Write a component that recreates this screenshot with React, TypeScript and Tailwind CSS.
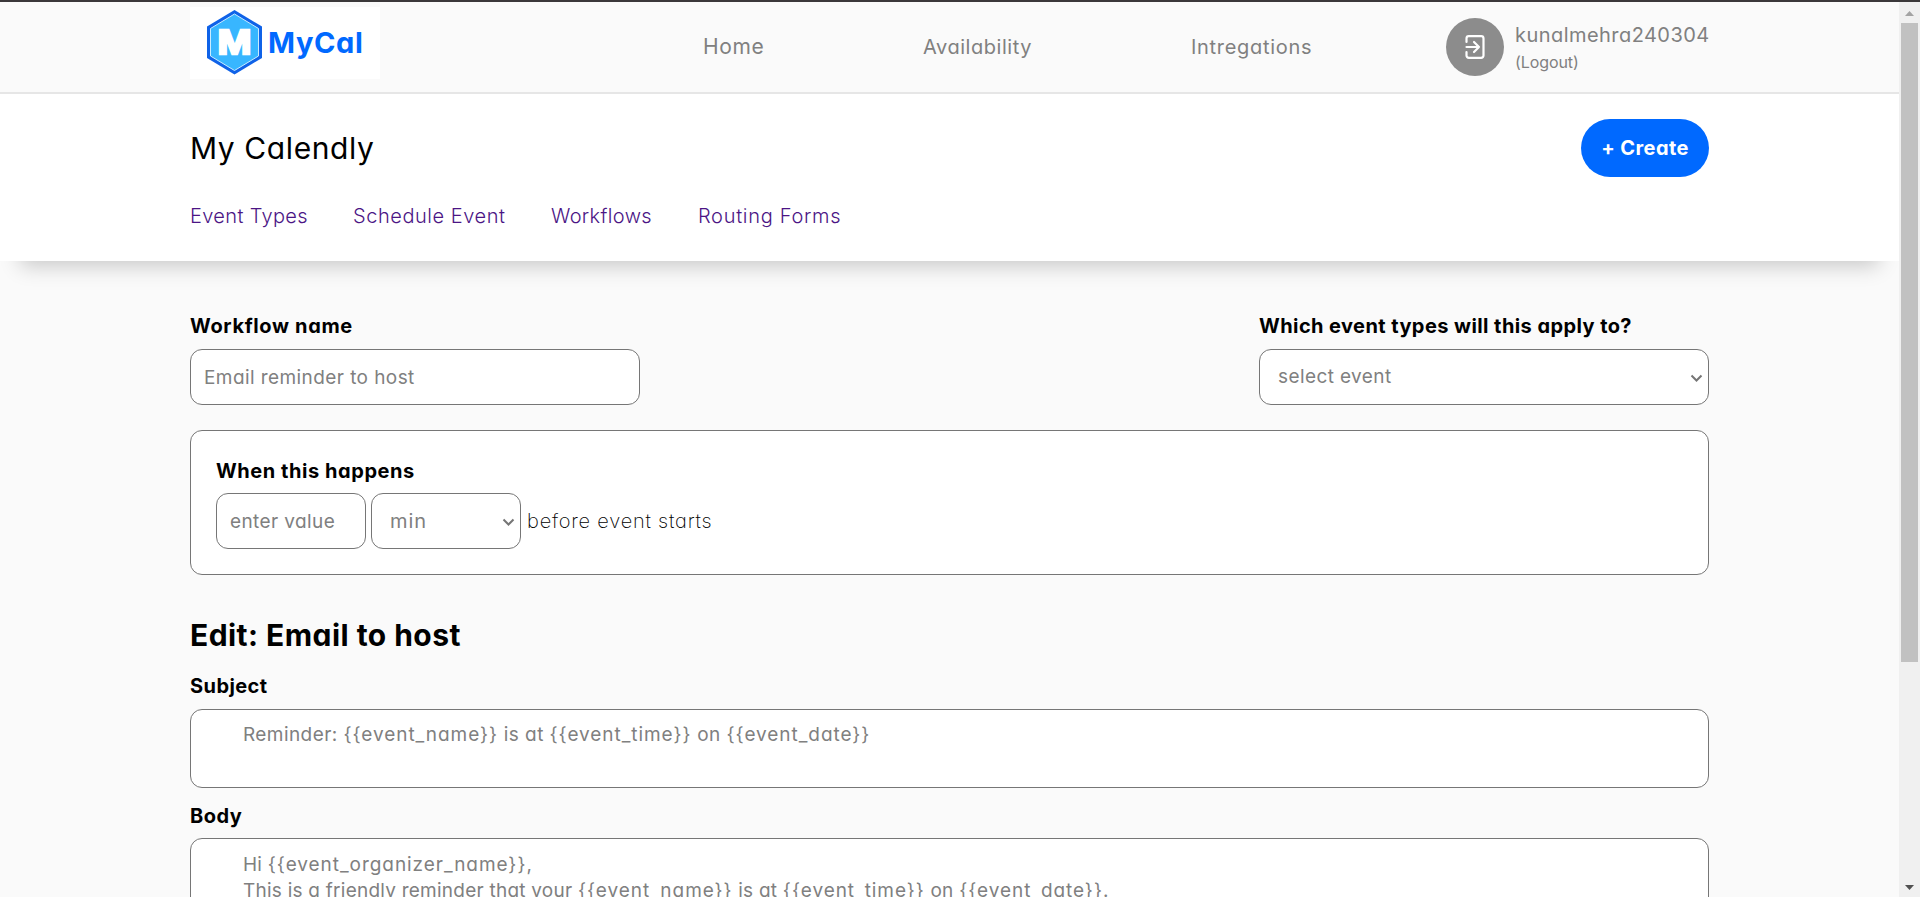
import type { ReactNode } from "react";

function Logo() {
  return (
    <div className="flex h-[72px] w-[190px] items-center bg-white pl-4">
      <svg className="h-[66px] w-[57px] shrink-0" viewBox="0 0 57 66">
        <polygon points="28.5,0 56,16.5 56,48 28.5,64.5 1,48 1,16.5" fill="#0f62e8" />
        <polygon
          points="28.5,4 52.5,18.5 52.5,46 28.5,60.5 4.5,46 4.5,18.5"
          fill="#38b6ff"
          stroke="#c9ecff"
          strokeWidth="1"
        />
        <text
          x="28.5"
          y="44"
          textAnchor="middle"
          textLength="34"
          lengthAdjust="spacingAndGlyphs"
          fontFamily="Liberation Sans, sans-serif"
          fontWeight="700"
          fontSize="35"
          fill="#fff"
          stroke="#fff"
          strokeWidth="2.4"
        >
          M
        </text>
      </svg>
      <span className="ml-[5px] text-[29px] font-bold tracking-[0.6px] text-[#0069ff]">MyCal</span>
    </div>
  );
}

function ExitIcon() {
  return (
    <svg
      className="h-6 w-5"
      viewBox="0 0 20 24"
      fill="none"
      stroke="#fff"
      strokeWidth="2.2"
      strokeLinecap="round"
      strokeLinejoin="round"
    >
      <path d="M1.5 7V3.5a2.3 2.3 0 0 1 2.3-2.3h12.4a2.3 2.3 0 0 1 2.3 2.3v17a2.3 2.3 0 0 1-2.3 2.3H3.8a2.3 2.3 0 0 1-2.3-2.3V17" />
      <path d="M1.5 12H14M9 7l5 5-5 5" />
    </svg>
  );
}

function Select({ value, className }: { value: string; className: string }) {
  return (
    <div
      className={`flex h-14 items-center justify-between rounded-xl border border-[#767676] bg-white pr-[5px] pl-[18px] text-[#808080] ${className}`}
    >
      <span>{value}</span>
      <svg className="mt-0.5 h-[9px] w-[13px]" viewBox="0 0 13 9" fill="none" stroke="#757575" strokeWidth="2">
        <path d="M1.5 1.5l5 5 5-5" />
      </svg>
    </div>
  );
}

function Label({ children, className }: { children: ReactNode; className: string }) {
  return <label className={`block text-[20px] leading-[30px] font-bold text-black ${className}`}>{children}</label>;
}

/** Renders template text, spacing {{placeholders}} a little wider than the prose. */
function Template({ text }: { text: string }) {
  return (
    <>
      {text.split(/(\{\{\w+\}\})/).map((part, i) => (
        <span key={i} className={part.startsWith("{{") ? "tracking-[0.95px]" : ""}>
          {part}
        </span>
      ))}
    </>
  );
}

function Scrollbar() {
  return (
    <div className="flex w-[21px] shrink-0 flex-col items-center bg-[#f0f0f0]">
      <svg className="mt-[9px] h-[5px] w-[9px] shrink-0" viewBox="0 0 9 5" fill="#a3a3a3">
        <path d="M0 5L4.5 0 9 5z" />
      </svg>
      <div className="mt-[7px] h-[639px] w-[17px] bg-[#c1c1c1]" />
      <svg className="mt-auto mb-[7px] h-[5px] w-[9px] shrink-0" viewBox="0 0 9 5" fill="#505050">
        <path d="M0 0h9L4.5 5z" />
      </svg>
    </div>
  );
}

export default function App() {
  return (
    <div className="flex h-[897px] w-[1920px] flex-col overflow-hidden whitespace-nowrap bg-[#fafafa] font-['Inter',sans-serif] [font-feature-settings:'cv11']">
      <div className="h-0.5 shrink-0 bg-[#3b383a]" />
      <div className="flex min-h-0 flex-1">
        <div className="min-w-0 flex-1 overflow-hidden">
          <header className="h-[92px] border-b-2 border-[#e6e6e6] pr-[190px] pl-[190px] text-[20px] text-[#808080]">
            <div className="flex h-[90px] items-center">
              <div className="-mt-2">
                <Logo />
              </div>
              <nav className="ml-[323px] flex items-center gap-40">
                <a className="w-[60px] text-[21px] tracking-[0.6px]">Home</a>
                <a className="w-[108px] tracking-[0.55px]">Availability</a>
                <a className="tracking-[0.7px]">Intregations</a>
              </nav>
              <div className="ml-auto flex items-center gap-[11px]">
                <div className="flex h-[58px] w-[58px] items-center justify-center rounded-full bg-[#8c8c8c]">
                  <ExitIcon />
                </div>
                <div className="w-[194px]">
                  <div className="leading-[30px] tracking-[0.45px]">kunalmehra240304</div>
                  <div className="text-[16px] leading-[24px] tracking-[-0.1px]">(Logout)</div>
                </div>
              </div>
            </div>
          </header>

          <section className="h-[167px] bg-white px-[190px] pt-[25px] shadow-[0_25px_20px_-20px_rgba(0,0,0,0.2)]">
            <div className="flex h-[58px] items-center justify-between">
              <h1 className="text-[30px] tracking-[0.6px] text-black">My Calendly</h1>
              <button className="h-[58px] w-32 rounded-full bg-[#0069ff] text-[20px] font-bold tracking-[0.4px] text-white">
                + Create
              </button>
            </div>
            <div className="mt-6 flex text-[20px] leading-[30px] font-light text-[#4b1585]">
              <a className="w-[163px] tracking-[0.35px]">Event Types</a>
              <a className="w-[198px] tracking-[0.55px]">Schedule Event</a>
              <a className="w-[147px] tracking-[0.35px]">Workflows</a>
              <a className="tracking-[0.7px]">Routing Forms</a>
            </div>
          </section>

          <main className="px-[190px] pt-[50px]">
            <div className="flex justify-between">
              <div>
                <Label className="tracking-[0.65px]">Workflow name</Label>
                <input
                  className="mt-2 block h-14 w-[450px] rounded-xl border border-[#767676] bg-white px-[13px] text-[19px] tracking-[0.42px] placeholder:text-[#808080]"
                  placeholder="Email reminder to host"
                />
              </div>
              <div>
                <Label className="tracking-[0.42px]">Which event types will this apply to?</Label>
                <Select value="select event" className="mt-2 w-[450px] text-[19px] tracking-[0.4px]" />
              </div>
            </div>

            <div className="mt-[25px] rounded-xl border border-[#767676] bg-white p-[25px]">
              <Label className="tracking-[0.56px]">When this happens</Label>
              <div className="mt-[7px] flex items-center">
                <input
                  className="block h-14 w-[150px] rounded-xl border border-[#767676] bg-white px-[13px] text-[19px] tracking-[0.4px] placeholder:text-[#808080]"
                  placeholder="enter value"
                />
                <Select value="min" className="ml-[5px] w-[150px] text-[20px] tracking-[1px]" />
                <span className="ml-[6px] text-[20px] font-extralight tracking-[0.8px] text-black">
                  before event starts
                </span>
              </div>
            </div>

            <h2 className="mt-[38px] text-[30px] leading-[45px] font-bold tracking-[0.45px] text-black">
              Edit: Email to host
            </h2>
            <Label className="mt-[13px] tracking-[0.42px]">Subject</Label>
            <div className="mt-2 h-[79px] rounded-xl border border-[#767676] bg-white px-[52px] pt-3 text-[19px] leading-[26px] tracking-[0.42px] text-[#808080]">
              <Template text="Reminder: {{event_name}} is at {{event_time}} on {{event_date}}" />
            </div>
            <Label className="mt-[13px] tracking-[0.5px]">Body</Label>
            <div className="mt-[7px] h-[240px] rounded-xl border border-[#767676] bg-white px-[52px] pt-[13px] text-[19px] leading-[26px] tracking-[0.24px] text-[#808080]">
              <p>
                <Template text="Hi {{event_organizer_name}}," />
              </p>
              <p>
                <Template text="This is a friendly reminder that your {{event_name}} is at {{event_time}} on {{event_date}}." />
              </p>
            </div>
          </main>
        </div>
        <Scrollbar />
      </div>
    </div>
  );
}
